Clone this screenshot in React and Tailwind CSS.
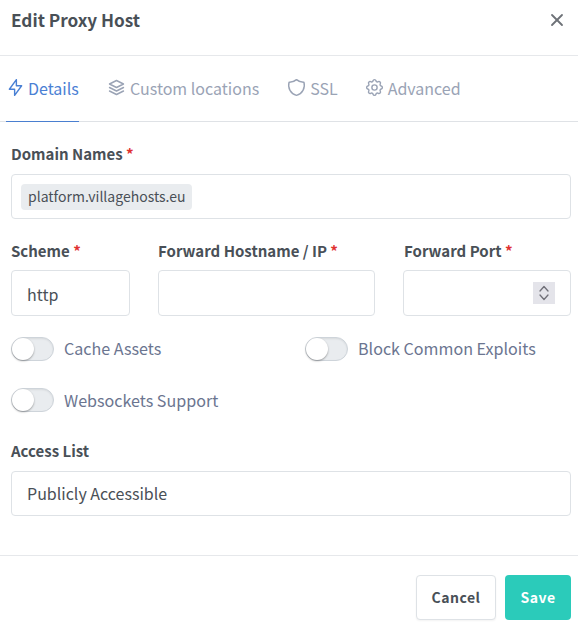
import React from "react";

const font = "font-['Noto_Sans_CJK_SC','Noto_Sans',sans-serif]";

function Icon({ children, size = 21, sw = 1.6, className = "" }) {
  return (
    <svg
      width={size}
      height={size}
      viewBox="0 0 24 24"
      fill="none"
      stroke="currentColor"
      strokeWidth={sw}
      strokeLinecap="round"
      strokeLinejoin="round"
      className={`shrink-0 ${className}`}
    >
      {children}
    </svg>
  );
}

const iconOffset = "-mx-[1.5px]";
const Bolt = () => (
  <Icon className={iconOffset}><path d="M13 3v7h6l-8 11v-7h-6l8 -11" /></Icon>
);
const Stack = () => (
  <Icon className={iconOffset}><path d="M12 4l-8 4l8 4l8 -4l-8 -4" /><path d="M4 12l8 4l8 -4" /><path d="M4 16l8 4l8 -4" /></Icon>
);
const ShieldI = () => (
  <Icon className={iconOffset}><path d="M12 3a12 12 0 0 0 8.5 3a12 12 0 0 1 -8.5 15a12 12 0 0 1 -8.5 -15a12 12 0 0 0 8.5 -3" /></Icon>
);
const Cog = () => (
  <Icon className={iconOffset}>
    <path d="M10.325 4.317c.426 -1.756 2.924 -1.756 3.35 0a1.724 1.724 0 0 0 2.573 1.066c1.543 -.94 3.31 .826 2.37 2.37a1.724 1.724 0 0 0 1.065 2.572c1.756 .426 1.756 2.924 0 3.35a1.724 1.724 0 0 0 -1.066 2.573c.94 1.543 -.826 3.31 -2.37 2.37a1.724 1.724 0 0 0 -2.572 1.065c-.426 1.756 -2.924 1.756 -3.35 0a1.724 1.724 0 0 0 -2.573 -1.066c-1.543 .94 -3.31 -.826 -2.37 -2.37a1.724 1.724 0 0 0 -1.065 -2.572c-1.756 -.426 -1.756 -2.924 0 -3.35a1.724 1.724 0 0 0 1.066 -2.573c-.94 -1.543 .826 -3.31 2.37 -2.37c1 .608 2.296 .07 2.572 -1.065z" />
    <circle cx="12" cy="12" r="3" />
  </Icon>
);

function Label({ children, req, className = "" }) {
  return (
    <div className={`text-[15px] leading-[24px] font-bold text-[#495057] ${className}`}>
      {children}
      {req && <span className="text-[#e03131]"> *</span>}
    </div>
  );
}

function Toggle({ label, className = "", labelClass = "pb-[2px]" }) {
  return (
    <div className={`flex items-center gap-[10px] h-[24px] ${className}`}>
      <div className="w-[43px] h-[24px] rounded-full bg-[#e9ecef] border border-[#ced4da] flex items-center shadow-[inset_0_1px_2px_rgba(0,0,0,0.08)]">
        <div className="w-[22px] h-[22px] rounded-full bg-white shadow-[0_1px_2px_rgba(0,0,0,0.35)]" />
      </div>
      <span className={`text-[16.1px] leading-[22px] text-[#6b7590] ${labelClass}`}>{label}</span>
    </div>
  );
}

function Tab({ icon: I, label, active, className = "" }) {
  return (
    <div
      className={`h-[66px] flex items-center pb-[2px] text-[16px] border-b ${
        active ? "border-[#4a7fd0] text-[#4a80d4]" : "border-transparent text-[#9aa3b5]"
      } ${className}`}
    >
      <I />
      <span>{label}</span>
    </div>
  );
}

export default function App() {
  return (
    <div className={`${font} w-[578px] h-[631px] bg-white flex flex-col overflow-hidden`}>
      <header className="h-[56px] shrink-0 border-b border-[#e6e8eb] flex items-start justify-between pl-[11px] pr-[11px]">
        <h1 className="text-[17.2px] leading-[24px] mt-[8px] font-bold text-[#495057]">Edit Proxy Host</h1>
        <Icon size={20} sw={2.2} className="text-[#6e7278] mt-[10px]">
          <path d="M18 6l-12 12" />
          <path d="M6 6l12 12" />
        </Icon>
      </header>

      <nav className="h-[66px] shrink-0 border-b border-[#dfe2e6] flex pl-[6px]">
        <Tab icon={Bolt} label="Details" active className="w-[73px] gap-[4px]" />
        <Tab icon={Stack} label="Custom locations" className="ml-[28px] gap-[5px]" />
        <Tab icon={ShieldI} label="SSL" className="ml-[28px] gap-[5px]" />
        <Tab icon={Cog} label="Advanced" className="ml-[28px] gap-[4px]" />
      </nav>

      <main className="flex-1 px-[11px] pr-[7px] pt-[20px]">
        <Label req>Domain Names</Label>
        <div className="mt-[8px] h-[45px] border border-[#dee2e6] rounded-[4px] flex items-center pl-[9px]">
          <span className="h-[26px] pl-[7px] pr-[6px] rounded-[4px] bg-[#e9ecef] text-[14px] leading-[24px] text-[#495057]">
            platform.villagehosts.eu
          </span>
        </div>

        <div className="mt-[20px] flex">
          <div className="w-[119px]">
            <Label req>Scheme</Label>
            <div className="mt-[7px] h-[46px] border border-[#dee2e6] rounded-[4px] flex items-center pl-[15px] pt-[2px] text-[16px] text-[#495057]">
              http
            </div>
          </div>
          <div className="w-[217px] ml-[28px]">
            <Label req>Forward Hostname / IP</Label>
            <div className="mt-[7px] h-[46px] border border-[#dee2e6] rounded-[4px]" />
          </div>
          <div className="w-[168px] ml-[28px]">
            <Label req className="pl-px">Forward Port</Label>
            <div className="mt-[7px] h-[46px] border border-[#dee2e6] rounded-[4px] flex items-center justify-end pr-[15px]">
              <div className="w-[22px] h-[22px] bg-[#e4e4ea] text-[#707078]">
                <svg width="22" height="22" viewBox="0 0 22 22" fill="none" stroke="currentColor" strokeWidth="1.3" strokeLinecap="round" strokeLinejoin="round">
                  <path d="M7 9L11 4.5L15 9" />
                  <path d="M7 13L11 17.5L15 13" />
                </svg>
              </div>
            </div>
          </div>
        </div>

        <div className="mt-[21px] flex">
          <Toggle label="Cache Assets" className="w-[294px]" />
          <Toggle label="Block Common Exploits" />
        </div>
        <Toggle label="Websockets Support" className="mt-[27px]" labelClass="pb-0" />

        <div className="mt-[27px]">
          <Label>Access List</Label>
          <div className="mt-[8px] h-[45px] border border-[#dee2e6] rounded-[4px] flex items-center pl-[15px] pb-[2px] text-[16px] text-[#495057]">
            Publicly Accessible
          </div>
        </div>
      </main>

      <footer className="h-[76px] shrink-0 border-t border-[#e6e8eb] flex justify-end items-start gap-[9px] pt-[19px] pr-[7px]">
        <button className="w-[80px] h-[45px] rounded-[4px] border border-[#dee2e6] bg-white shadow-[0_1px_2px_rgba(0,0,0,0.05)] text-[14px] font-bold tracking-[0.5px] text-[#495057]">
          Cancel
        </button>
        <button className="w-[66px] h-[45px] rounded-[4px] bg-[#2bcbba] text-[14px] font-bold tracking-[0.5px] text-white">
          Save
        </button>
      </footer>
    </div>
  );
}
